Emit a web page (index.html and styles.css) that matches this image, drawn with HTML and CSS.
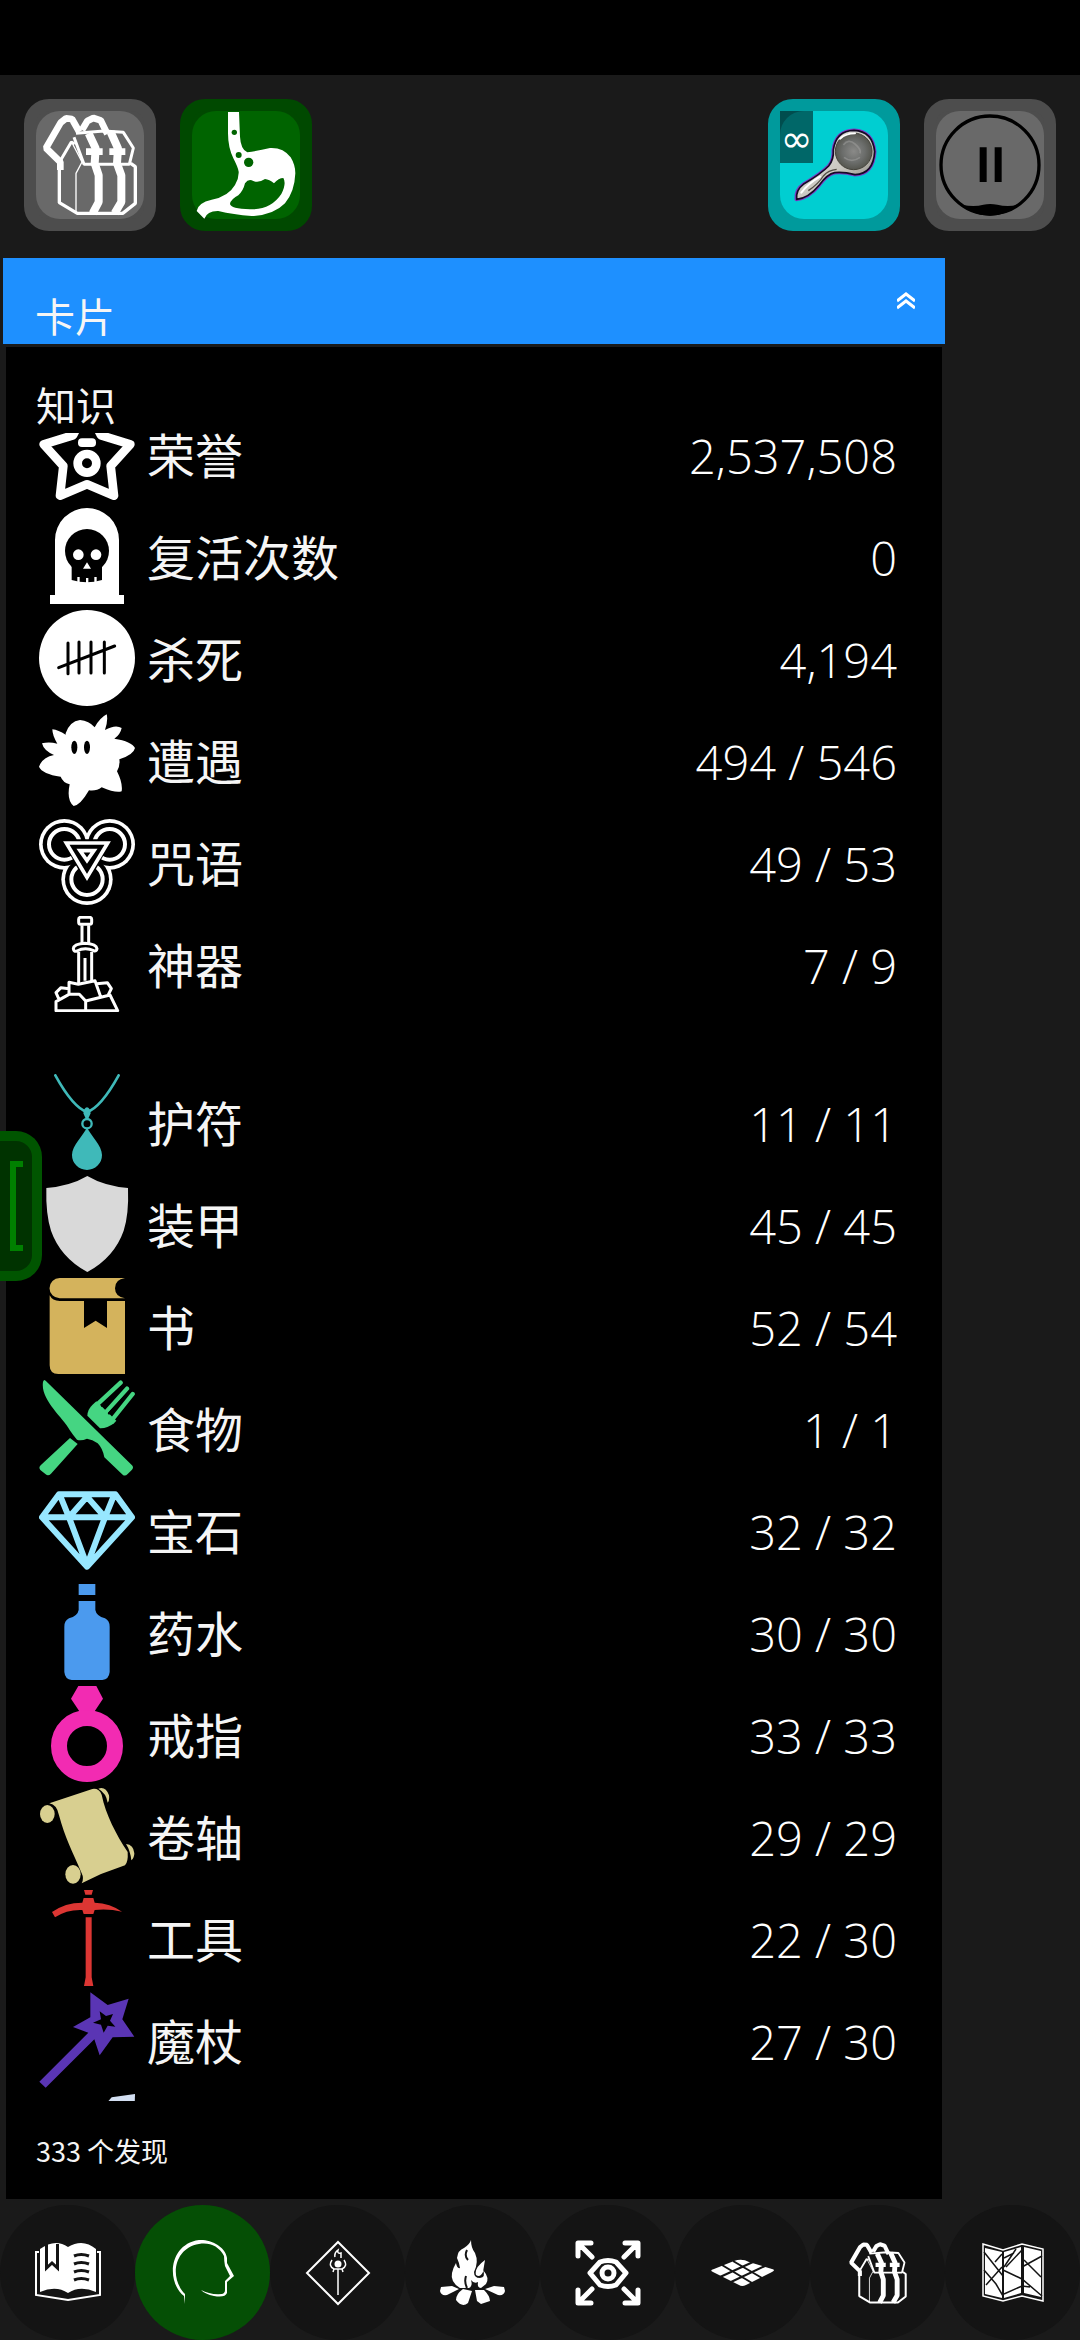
FILE: index.html
```html
<!DOCTYPE html>
<html lang="zh-CN">
<head>
<meta charset="utf-8">
<meta name="viewport" content="width=device-width">
<title>卡片</title>
<link rel="stylesheet" href="styles.css">
</head>
<body>
<svg class="defs" aria-hidden="true">
  <symbol id="backpack" viewBox="108 123 324 324">
    <g fill="none" stroke="currentColor" stroke-linejoin="bevel">
      <path stroke-width="20" d="M181 300V276L138 234L182 158L198 145L216 147L238 186"/>
      <path stroke-width="20" d="M246 180L262 153L280 144L302 151L322 192"/>
      <path stroke-width="9" d="M228 190L312 183L370 187L400 234L388 283H252L222 202"/>
      <path stroke-width="10" d="M182 272L178 282V398L232 430H368L406 400V290L392 280"/>
      <path stroke-width="9" d="M181 272L214 216L224 222"/>
      <path stroke-width="4" d="M218 222L246 276L228 310V430"/>
      <path stroke-width="24" d="M266 190L287 235L284 280L296 316V396L278 430"/>
      <path stroke-width="24" d="M332 186L354 235L351 280L364 316V396L344 430"/>
      <path stroke-width="20" d="M258 245H308M328 245H376"/>
    </g>
  </symbol>
</svg>

<div class="status"></div>

<header class="toolbar">
  <button class="tool grey" aria-label="背包"><svg><use href="#backpack"/></svg></button>
  <button class="tool green" aria-label="饱食">
    <svg viewBox="576 123 324 324"><path fill="#fff" fill-rule="evenodd" d="M684 126H717L720 200Q722 238 742 247Q775 242 810 234Q850 232 872 262Q886 285 886 310Q884 365 855 400Q820 436 755 438Q700 434 655 423Q622 422 613 446L590 423Q594 398 635 389Q685 380 705 345Q717 325 716 305Q714 292 700 265Q684 232 684 190ZM735 340Q746 324 760 333Q775 340 795 327Q808 328 822 340Q836 324 850 324Q860 340 844 372Q812 420 750 418Q692 416 690 402Q692 388 715 376Q730 362 735 340Z"/><g fill="#006400"><circle cx="703" cy="187" r="8"/><circle cx="716" cy="255" r="9"/><circle cx="746" cy="277" r="14"/></g></svg>
  </button>
  <span class="spring"></span>
  <button class="tool cyan" aria-label="放大镜">
    <svg viewBox="120 123 324 324">
      <defs>
        <linearGradient id="silver" x1="0" y1="0" x2="1" y2="1"><stop offset="0" stop-color="#eee"/><stop offset=".55" stop-color="#c9c7c0"/><stop offset="1" stop-color="#77746c"/></linearGradient>
        <radialGradient id="lens"><stop offset="0" stop-color="#8a8a88"/><stop offset=".6" stop-color="#6c6e6c"/><stop offset="1" stop-color="#55564f"/></radialGradient>
      </defs>
      <g stroke-linejoin="round">
        <path fill="#7a3cc8" stroke="#7a3cc8" stroke-width="11" d="M169 388Q166 360 190 343Q245 310 266 288Q282 268 280 240Q288 182 342 181Q398 184 404 245Q400 312 345 314Q310 305 284 308Q262 312 238 345Q205 385 169 388Z"/>
        <path fill="url(#silver)" stroke="#150a25" stroke-width="5" d="M170 388Q167 360 190 343Q245 310 266 288Q282 268 280 240Q288 182 342 181Q398 184 404 245Q400 312 345 314Q310 305 284 308Q262 312 238 345Q205 385 170 388Z"/>
      </g>
      <circle cx="341" cy="244" r="55" fill="url(#lens)" stroke="#45443c" stroke-width="3"/>
      <path fill="none" stroke="#a2a2a0" stroke-width="5" opacity=".5" d="M310 225Q325 205 345 222T360 250M312 262Q335 280 360 262"/>
      <path fill="none" stroke="#fff" stroke-width="6" stroke-linecap="round" d="M184 368Q205 340 240 320M300 206Q318 190 345 190"/>
      <path fill="none" stroke="#514d45" stroke-width="4" d="M205 362Q235 342 250 318Q265 300 290 298"/>
    </svg>
    <span class="count">∞</span>
  </button>
  <button class="tool grey" aria-label="暂停">
    <svg viewBox="588 123 324 324"><circle cx="750" cy="285" r="147" fill="none" stroke="#000" stroke-width="10"/><path d="M719 232h21v104h-21zM764 232h21v104h-21zM668 405Q705 411 730 404Q750 400 772 404Q800 411 832 405Q798 437 750 437T668 405Z"/></svg>
  </button>
</header>

<main>
  <section class="panel">
    <header class="panel-head">
      <h1>卡片</h1>
      <button class="collapse" aria-label="收起"><svg viewBox="0 0 18 18"><path fill="none" stroke="#fff" stroke-width="3" d="M0 9L9 2L18 9M0 16L9 9L18 16"/></svg></button>
    </header>
    <div class="panel-body">
      <h2>知识</h2>
      <div class="scroll">
        <dl>
          <div class="row">
            <svg viewBox="0 0 288 288"><g fill="none" stroke="#fff" stroke-width="26" stroke-linejoin="round"><path d="M144 5L102 88L14 115L73 180L63 269L144 235L225 269L215 180L274 115L186 88Z"/><circle cx="144" cy="172" r="28"/></g><path d="M124 75H164L170 100H118Z"/><rect x="117" y="97" width="54" height="26" rx="12" fill="#fff"/></svg>
            <dt>荣誉</dt><dd>2,537,508</dd>
          </div>
          <div class="row">
            <svg viewBox="0 0 288 288"><path fill="#fff" d="M48 96A96 96 0 0 1 240 96V261H255V288H33V261H48Z"/><circle cx="144" cy="129" r="66"/><path d="M98 170H189V216Q144 230 98 216Z"/><g fill="#fff"><circle cx="118" cy="140" r="16"/><circle cx="171" cy="140" r="16"/><path d="M144 163L156 182H132ZM115 207h7v17h-7zM141 210h7v17h-7zM166 207h7v17h-7z"/></g></svg>
            <dt>复活次数</dt><dd>0</dd>
          </div>
          <div class="row">
            <svg viewBox="0 0 288 288"><circle cx="144" cy="144" r="144" fill="#fff"/><path stroke="#000" stroke-width="9" stroke-linecap="round" d="M87 99V191M120 96V189M156 96V189M196 96V189M59 173L227 108"/></svg>
            <dt>杀死</dt><dd>4,194</dd>
          </div>
          <div class="row">
            <svg viewBox="0 0 288 288"><path fill="#fff" d="M80 64Q92 28 123 24Q150 26 167 46Q182 18 203 7Q208 24 198 54Q230 36 248 48Q244 68 226 80Q278 88 288 108Q284 128 241 142Q244 160 234 178Q252 214 248 238Q230 244 188 226Q172 238 150 235Q124 280 104 282Q82 264 92 217Q72 212 65 194Q10 186 0 164Q10 136 45 129Q14 116 9 94Q30 88 55 95Q40 70 40 52Q58 54 80 68Z"/><ellipse cx="106" cy="106" rx="9" ry="20"/><ellipse cx="144" cy="106" rx="9" ry="20"/></svg>
            <dt>遭遇</dt><dd>494 / 546</dd>
          </div>
          <div class="row">
            <svg viewBox="0 0 288 288"><g fill="#fff"><circle cx="76" cy="91" r="76"/><circle cx="212" cy="91" r="76"/><circle cx="144" cy="196" r="77"/></g><circle cx="76" cy="91" r="65"/><circle cx="212" cy="91" r="65"/><circle cx="144" cy="196" r="66"/><path d="M76 84H212L144 196Z"/><g fill="none" stroke="#fff" stroke-width="12"><circle cx="76" cy="91" r="46"/><circle cx="212" cy="91" r="46"/><circle cx="144" cy="196" r="47"/></g><path d="M68 76H220L144 214Z"/><path fill="none" stroke="#fff" stroke-width="11" d="M82 87H206L144 190ZM123 110H165L144 140Z"/></svg>
            <dt>咒语</dt><dd>49 / 53</dd>
          </div>
          <div class="row">
            <svg viewBox="0 0 288 288"><g fill="none" stroke="#fff" stroke-width="9" stroke-linejoin="round"><rect x="119" y="4" width="39" height="21" rx="6"/><path d="M129 28V82M149 28V82M119 108V204M158 108V198M138 126V194"/><path d="M103 98Q104 84 138 82Q172 84 174 98Q172 108 164 104Q138 92 114 105Q104 108 103 98Z"/><path d="M51 284V257L90 235H121L140 255L213 237L236 284ZM140 255V284M90 235V199L118 205L168 194L185 242M60 250L51 230L66 215L90 218M173 203L205 200L217 218L208 236"/></g></svg>
            <dt>神器</dt><dd>7 / 9</dd>
          </div>
          <div class="row group">
            <svg viewBox="0 0 288 288"><g fill="none" stroke="#3fb9b9" stroke-linecap="round"><path stroke-width="8" d="M49 4Q102 100 144 114Q186 100 239 4"/><circle cx="144" cy="149" r="14" stroke-width="7"/></g><path fill="#3fb9b9" d="M136 106Q144 94 152 106L155 118L147 136H141L133 118ZM144 160C155 185 189 215 189 243A45 45 0 0 1 99 243C99 215 133 185 144 160Z"/></svg>
            <dt>护符</dt><dd>11 / 11</dd>
          </div>
          <div class="row">
            <svg viewBox="0 0 288 288"><path fill="#d9d9d9" d="M145 0Q196 30 267 36Q270 115 254 164Q226 244 145 288Q64 244 36 164Q20 115 22 36Q94 30 145 0Z"/></svg>
            <dt>装甲</dt><dd>45 / 45</dd>
          </div>
          <div class="row">
            <svg viewBox="0 0 288 288"><g fill="#d4b35c"><path d="M62 0H258Q228 4 228 31Q228 56 258 61H62A30 30 0 0 1 62 0ZM32 52Q40 69 62 69H258V288H58Q32 288 32 262Z"/></g><path d="M135 66H204V150L170 128L135 150Z"/></svg>
            <dt>书</dt><dd>52 / 54</dd>
          </div>
          <div class="row">
            <svg viewBox="0 0 288 288"><g fill="#45d582"><path d="M145 107Q146 88 160 75L172 64L232 122L225 130Q204 146 183 145Z"/><path stroke="#45d582" stroke-width="13" stroke-linecap="round" d="M174 74L245 8M194 104L264 26M214 126L281 42"/><path d="M93 174L116 192L36 281Q28 290 20 283L4 270Q-2 262 5 256ZM16 0L20 2L279 256Q285 262 279 269L266 282Q258 290 251 284L196 232Q191 205 176 190Q160 178 144 176Q126 184 114 179Q104 168 92 150C70 110 4 60 12 6Q14 0 16 0Z"/></g><path stroke="#000" stroke-width="7" stroke-linecap="round" d="M189 77L255 16M210 100L273 34"/></svg>
            <dt>食物</dt><dd>1 / 1</dd>
          </div>
          <div class="row">
            <svg viewBox="0 0 288 288"><g fill="none" stroke="#97e7ff" stroke-width="18" stroke-linejoin="round"><path d="M60 37H229L279 106L144 254L9 106ZM9 106H279M63 40L90 106L144 44L198 106L225 40M90 106L144 250L198 106"/></g></svg>
            <dt>宝石</dt><dd>32 / 32</dd>
          </div>
          <div class="row">
            <svg viewBox="0 0 288 288"><path fill="#4b9aee" d="M119 0H169V33H119ZM119 51H169V78Q172 96 198 103Q212 110 212 128V264Q210 286 190 288H98Q78 286 76 264V128Q76 110 90 103Q116 96 119 78Z"/></svg>
            <dt>药水</dt><dd>30 / 30</dd>
          </div>
          <div class="row">
            <svg viewBox="0 0 288 288"><path fill="#f22bb2" d="M118 0H172L192 38L167 76V90H121V76L96 38Z"/><circle cx="144" cy="180" r="84" fill="none" stroke="#f22bb2" stroke-width="48"/></svg>
            <dt>戒指</dt><dd>33 / 33</dd>
          </div>
          <div class="row">
            <svg viewBox="0 0 288 288"><g fill="#d8cf90"><path d="M31 46L160 3Q180 0 188 20C200 80 232 140 266 192Q268 222 258 232L186 258L128 286Q136 272 128 256C100 190 78 150 60 82Q54 50 31 46Z"/><ellipse cx="25" cy="78" rx="22" ry="27"/><ellipse cx="102" cy="259" rx="23" ry="28"/><path d="M178 2Q200-6 210 22Q212 38 206 44Q202 16 178 2ZM261 168Q284 170 286 196Q286 210 277 217Q274 188 261 168Z"/></g></svg>
            <dt>卷轴</dt><dd>29 / 29</dd>
          </div>
          <div class="row">
            <svg viewBox="0 0 288 288"><path fill="#dc3633" d="M135 0H162L158 14H139ZM134 24H163L167 38Q214 40 249 65Q210 56 167 60L163 72H134L130 60Q84 58 48 82L39 66Q78 38 130 38ZM140 82H158V262L163 288H135L140 262Z"/></svg>
            <dt>工具</dt><dd>22 / 30</dd>
          </div>
          <div class="row">
            <svg viewBox="0 0 288 288"><path fill="#5a35b4" fill-rule="evenodd" d="M154 1L206 39L269 20L250 82L286 134L221 136L182 190L166 142L20 287L1 269L148 122L102 105L154 76ZM182 58L186 82L162 92L186 98L194 122L206 101L229 104L213 86L222 66L201 72Z"/></svg>
            <dt>魔杖</dt><dd>27 / 30</dd>
          </div>
          <div class="row" aria-label="武器">
            <svg viewBox="0 0 288 288"><path fill="#d3dff2" d="M288 0L218 10L30 225L62 258L286 72Z"/></svg>
          </div>
        </dl>
      </div>
      <p class="found">333 个发现</p>
    </div>
  </section>
  <button class="side-tab" aria-label="展开侧栏"><span></span></button>
</main>

<nav>
  <button aria-label="日志"><svg viewBox="0 0 66 66"><path fill="none" stroke="#fff" stroke-width="2" d="M4 12H1V55L33 60L65 55V12H62"/><path fill="#fff" d="M5 9Q20-2 33 7Q48-2 61 9V52Q45 45 33 53Q21 45 5 52Z"/><path fill="#141414" d="M6 54Q20 45 33 54Q46 45 60 54L33 58Z"/><path fill="none" stroke="#141414" stroke-width="3" d="M11.500 4V28L17 23L22.500 28V4M39 16Q46 13 54 16M39 24Q46 21 54 24M39 32Q46 29 54 32M39 40Q46 37 54 40"/></svg></button>
  <button class="active" aria-label="知识"><svg viewBox="0 0 66 66"><path fill="#fff" d="M15 64L14 56C-4 42-1 4 29 0C42-1 56 8 57 18V23L64 36L57 42V53Q55 58 44 56Q35 54 31 50Q40 55 52 54Q55 53 55 50V41L60 36L55 26Q54 20 54 16C49 6 39 2 29 4C4 8-1 38 15 54Z"/></svg></button>
  <button aria-label="法杖"><svg viewBox="0 0 66 66"><g fill="none" stroke="#fff"><path stroke-width="2" d="M33 2L64 33L33 64L2 33Z"/><path stroke-width="1.500" d="M33 29V55M27 20Q23 26 29 29L28 32M39 20Q43 26 37 29L38 32M28 29H38M30 17Q29 13 33 10Q32 14 36 13V18"/></g><circle cx="33" cy="24" r="3.500" fill="#fff"/></svg></button>
  <button aria-label="营地"><svg viewBox="0 0 66 66"><g fill="#fff"><path d="M20 48Q10 42 12 33Q13 28 16 23Q17 29 20 28Q19 22 17 18Q18 10 24 8Q30 4 31 0Q31 8 35 13Q39 22 34 32Q34 38 40 38Q46 37 43 30Q50 38 46 44L41 48Q37 48 38 42Q34 44 31 40Q33 46 29 48Z"/><path d="M45 20Q44 26 43 32Q40 38 36 35Q34 28 45 20ZM1 47L12 46L19 49L7 55Q1 56 0 51ZM64 47L54 46L45 49L58 55Q64 56 65 51ZM23 49L32 51L28 63Q22 68 16 60Q16 54 23 49ZM35 50L44 50Q50 56 50 61L41 64L37 61Z"/></g><path fill="none" stroke="#141414" stroke-width="2" d="M27 10Q24 16 28 20M27 48Q24 42 26 36"/></svg></button>
  <button aria-label="探查"><svg viewBox="0 0 66 66"><g fill="none" stroke="#fff" stroke-width="5" stroke-linecap="round" stroke-linejoin="round"><path d="M3 16V3H16M4 4L17 17M50 3H63V16M62 4L49 17M3 50V63H16M4 62L17 49M50 63H63V50M62 62L49 49"/><path d="M15 33L25 22Q33 19 41 22L51 33L41 45Q33 48 25 45Z"/><circle cx="33" cy="33" r="6"/></g></svg></button>
  <button aria-label="棋盘"><svg viewBox="0 0 66 66"><path fill="#fff" d="M24 21Q32 18 39 22L62 29Q66 30 62 32L36 45Q32 47 29 45L3 32Q-1 30 4 29Z"/><path stroke="#141414" stroke-width="2" d="M23 21L52 38M12 25L42 43M10 37L43 22M21 42L55 26"/></svg></button>
  <button aria-label="背包"><svg><use href="#backpack"/></svg></button>
  <button aria-label="地图"><svg viewBox="0 0 66 66"><path fill="none" stroke="#fff" stroke-width="1.500" d="M3 4L23 10L42 4L63 9V61L42 56L23 61L3 56Z"/><path fill="#fff" d="M5 8L22 12V58L5 54ZM24 12L41 7V53L24 58ZM44 7L61 11V57L44 53Z"/><path fill="none" stroke="#141414" stroke-width="1.500" d="M4 12L23 36M4 30L16 44L23 56M22 27L6 45M22 14L15 22M23 30L42 39L62 56M24 27L36 9M26 27L42 10M24 18L34 13M24 54L42 46L50 47M42 27L62 16M44 20L61 37"/></svg></button>
</nav>
</body>
</html>
```
FILE: styles.css
```css
* { box-sizing: border-box; }

body {
  margin: 0;
  height: 100vh;
  display: flex;
  flex-direction: column;
  overflow: hidden;
  background: #1a1a1a;
  color: #f5f5f5;
  font-family: "Open Sans", "Noto Sans CJK SC", sans-serif;
}

svg { display: block; }
.defs { position: absolute; width: 0; height: 0; }

button {
  border: 0;
  padding: 0;
  color: #fff;
  font: inherit;
  background: none;
}

.status { height: 75px; background: #000; }

.toolbar {
  display: flex;
  gap: 24px;
  padding: 24px 24px 27px;
}
.spring { flex: 1; }

.tool {
  position: relative;
  width: 132px;
  height: 132px;
  border: 12px solid;
  border-radius: 25px;
}
.tool::before {
  content: "";
  position: absolute;
  inset: 0;
  border-radius: 24px;
  background: var(--face);
}
.tool svg { position: relative; width: 108px; height: 108px; }
.grey { --face: #696969; background: #4d4d4d; border-color: #4d4d4d; }
.green { --face: #006400; background: #004900; border-color: #004900; }
.cyan { --face: #00ced1; background: #009a9c; border-color: #009a9c; }

.count {
  position: absolute;
  top: 0;
  left: 0;
  width: 33px;
  height: 52px;
  background: rgba(0, 0, 0, .5);
  font-family: "DejaVu Sans", sans-serif;
  font-size: 38px;
  line-height: 56px;
  display: flex;
  justify-content: center;
}

main {
  position: relative;
  flex: 1;
  min-height: 0;
  display: flex;
  padding: 0 135px 0 3px;
}

.panel {
  flex: 1;
  min-width: 0;
  display: flex;
  flex-direction: column;
}
.panel-head {
  display: flex;
  justify-content: space-between;
  height: 86px;
  padding: 32px 30px 0 32px;
  background: #1e90ff;
}
h1, h2 {
  margin: 0;
  font-size: 40px;
  font-weight: 400;
  line-height: 54px;
}
.collapse { width: 18px; height: 22px; }

.panel-body {
  flex: 1;
  min-height: 0;
  display: flex;
  flex-direction: column;
  margin: 3px 3px 0;
  padding: 32px 45px 0 30px;
  background: #000;
}

.scroll { flex: 1; min-height: 0; overflow: hidden; margin-left: 3px; }
dl { margin: -30px 0 0; }
.row {
  display: flex;
  align-items: center;
  gap: 12px;
  height: 102px;
}
.group { margin-top: 56px; }
.row svg { flex: none; width: 96px; height: 96px; }
dt, dd {
  margin: 0;
  line-height: 46px;
  padding-top: 3px;
}
dt { flex: 1; font-size: 48px; }
dd { color: #fff; font-size: 47px; font-weight: 300; }

.found {
  margin: 0;
  height: 98px;
  padding-top: 30px;
  font-family: "Noto Sans CJK SC", sans-serif;
  font-size: 27px;
  line-height: 40px;
  color: #f5f5f5;
}

.side-tab {
  position: absolute;
  top: 45%;
  left: 0;
  width: 42px;
  height: 150px;
  padding-left: 10px;
  border: 10px solid #050;
  border-left: 0;
  border-radius: 0 26px 26px 0;
  background: #030;
}
.side-tab span {
  display: block;
  width: 13px;
  height: 90px;
  border: 6px solid #008000;
  border-right: 0;
}

nav {
  display: grid;
  grid-template-columns: repeat(8, 1fr);
  padding-top: 6px;
}
nav button {
  aspect-ratio: 1;
  display: grid;
  place-items: center;
  border-radius: 50%;
  background: #141414;
}
nav svg { width: 66px; height: 66px; }
nav .active { background: #054f05; }
```
